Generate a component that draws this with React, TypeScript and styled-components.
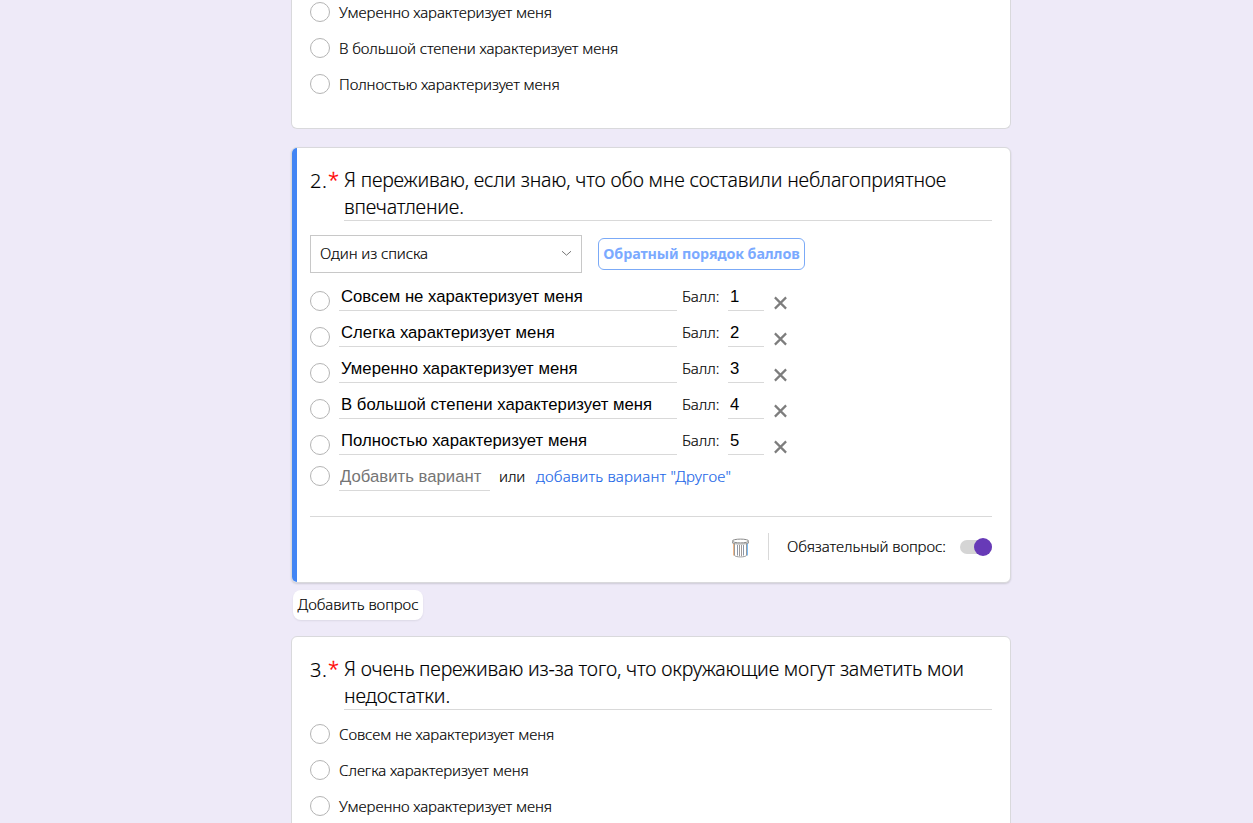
import React, { useState } from "react";
import styled, { createGlobalStyle } from "styled-components";

const GlobalStyle = createGlobalStyle`
  * { box-sizing: border-box; }
  body {
    margin: 0;
    background: #eeeaf8;
    color: #000;
    font-family: "Noto Sans", "Open Sans", sans-serif;
    font-weight: 300;
    font-size: 15px;
    letter-spacing: -0.085px;
    -webkit-text-stroke-width: 0.15px;
  }
  button, input { font: inherit; letter-spacing: inherit; color: inherit; }
`;

const Page = styled.main`
  width: 1253px;
  height: 823px;
  overflow: hidden;
  padding-left: 291px;
`;

const Card = styled.section<{ $active?: boolean; $cut?: "top" | "bottom" }>`
  display: flow-root;
  position: relative;
  width: 720px;
  padding: 0 18px;
  background: #fff;
  border: 1px solid #d9d9dc;
  border-radius: 6px;
  ${(p) => p.$active && "height: 436px; margin-top: 18px; box-shadow: 0 1px 2px rgba(0, 0, 0, 0.14);"}
  ${(p) => p.$cut === "top" && "height: 129px; border-top: 0; border-radius: 0 0 6px 6px;"}
  ${(p) => p.$cut === "bottom" && "height: 220px; margin-top: 16px;"}
`;

const ActiveBar = styled.span`
  position: absolute;
  left: 0;
  top: 0;
  bottom: 0;
  width: 5px;
  background: #4285f4;
  border-radius: 5px 0 0 5px;
`;

const Heading = styled.header`
  display: flex;
  padding-top: 18px;
  font-size: 19.5px;
  line-height: 27px;
  letter-spacing: -0.17px;
`;

const Number = styled.span`
  width: 18px;
  padding-top: 1px;
  font-size: 20px;
  letter-spacing: 0.6px;
`;

const Star = styled.span`
  width: 16px;
  color: #f00;
  font-size: 20px;
  -webkit-text-stroke-width: 0.3px;
`;

const Title = styled.div`
  flex: 1;
  border-bottom: 1px solid #d9d9d9;
`;

const Options = styled.div<{ $top: number }>`
  margin-top: ${(p) => p.$top}px;
`;

const Option = styled.label`
  display: flex;
  align-items: center;
  gap: 9px;
  height: 36px;
  line-height: 20px;
`;

const Circle = styled.span<{ $top?: number }>`
  flex: none;
  width: 20px;
  height: 20px;
  margin-top: ${(p) => p.$top ?? 0}px;
  border: 1px solid #b4b4b4;
  border-radius: 50%;
  background: #fff;
`;

const Controls = styled.div`
  display: flex;
  align-items: center;
  gap: 16px;
  margin-top: 14px;
`;

const Select = styled.div`
  display: flex;
  align-items: center;
  justify-content: space-between;
  width: 272px;
  height: 38px;
  padding: 0 9px 2px;
  border: 1px solid #c8c8c8;
`;

const ReverseButton = styled.button`
  width: 207px;
  height: 32px;
  padding: 0 0 2px;
  background: #fff;
  border: 1px solid #7baaf7;
  border-radius: 6px;
  color: #7baaff;
  font-weight: 700;
  font-size: 14.3px;
  letter-spacing: -0.1px;
  white-space: nowrap;
  -webkit-text-stroke-width: 0;
`;

const EditRow = styled.div`
  display: flex;
  align-items: flex-start;
  height: 36px;
`;

const Field = styled.input<{ $width: number }>`
  width: ${(p) => p.$width}px;
  height: 28px;
  padding: 1px 2px 0;
  border: 0;
  border-bottom: 1px solid #d9d9d9;
  outline: 0;
  background: transparent;
  color: #000;
  font: 400 16.7px "Liberation Sans", Arial, sans-serif;
  letter-spacing: 0.02px;
  -webkit-text-stroke-width: 0;
  &::placeholder { color: #757575; }
`;

const TextField = styled(Field)`
  margin-left: 9px;
`;

const AddField = styled(TextField)`
  padding: 1px 1px 0;
`;

const ScoreLabel = styled.span`
  width: 46px;
  margin-left: 5px;
  line-height: 26px;
`;

const IconButton = styled.button<{ $left?: number; $top?: number }>`
  display: flex;
  margin: ${(p) => p.$top ?? 0}px 0 0 ${(p) => p.$left ?? 0}px;
  padding: 0;
  border: 0;
  background: none;
`;

const AddRow = styled.div`
  display: flex;
  height: 28px;
  line-height: 26px;
`;

const Or = styled.span`
  width: 37px;
  margin-left: 9px;
`;

const Link = styled.a`
  color: #1a66e8;
  letter-spacing: 0.18px;
`;

const Footer = styled.footer`
  display: flex;
  align-items: center;
  justify-content: flex-end;
  height: 61px;
  margin-top: 25px;
  border-top: 1px solid #d9d9d9;
`;

const FooterLabel = styled.span`
  width: 159px;
  padding-bottom: 2px;
  white-space: nowrap;
`;

const Separator = styled.span`
  width: 1px;
  height: 27px;
  margin: -1px 18px 0;
  background: #d9d9d9;
`;

const Toggle = styled.span`
  display: flex;
  align-items: center;
  justify-content: flex-end;
  width: 32px;
  height: 14px;
  margin-left: 14px;
  border-radius: 7px;
  background: #d5d5d5;
`;

const Thumb = styled.span`
  width: 18px;
  height: 18px;
  border-radius: 50%;
  background: #673ab7;
`;

const AddQuestion = styled.button`
  display: block;
  width: 130px;
  height: 30px;
  margin: 7px 0 0 2px;
  padding: 0 0 2px;
  border: 0;
  border-radius: 8px;
  background: #fff;
  box-shadow: 0 1px 2px rgba(0, 0, 0, 0.08);
`;

const Chevron = () => (
  <svg width="11" height="7" viewBox="0 0 11 7" fill="none" stroke="#777" strokeWidth="1">
    <path d="M1 1.2 5.5 5.2 10 1.2" />
  </svg>
);

const Cross = () => (
  <svg width="14" height="14" viewBox="0 0 14 14" fill="none" stroke="#7d7d7d" strokeWidth="2.2">
    <path d="M1.9 1.4 13.1 12.6M13.1 1.4 1.9 12.6" />
  </svg>
);

const Trash = () => (
  <svg width="19" height="20" viewBox="0 0 19 20" fill="none" strokeWidth="1">
    <path d="M3.5 5.5v12c1.5 1.9 10.5 1.9 12 0v-12" stroke="#9a9a9a" />
    <path d="M2.5 5v12.5" stroke="#f3b98a" />
    <path d="M16.5 5v12.5" stroke="#7cbcf4" />
    <ellipse cx="9.5" cy="3" rx="8.2" ry="1.9" stroke="#8a8a8a" />
    <path d="M1.5 3.5v1.6c2 1.2 14 1.2 16 0V3.5" stroke="#999" />
    <path d="M6.5 7v10.5M12.5 7v10.5" stroke="#8d97a8" />
    <path d="M8.5 7v11M10.5 7v11" stroke="#a09a98" />
  </svg>
);

const answers = [
  "Совсем не характеризует меня",
  "Слегка характеризует меня",
  "Умеренно характеризует меня",
  "В большой степени характеризует меня",
  "Полностью характеризует меня",
];

const OptionList = ({ items, top }: { items: string[]; top: number }) => (
  <Options $top={top}>
    {items.map((item) => (
      <Option key={item}>
        <Circle />
        <span>{item}</span>
      </Option>
    ))}
  </Options>
);

export default function App() {
  const [rows, setRows] = useState(answers);
  return (
    <>
      <GlobalStyle />
      <Page>
        <Card $cut="top">
          <OptionList items={answers.slice(2)} top={-6} />
        </Card>

        <Card $active>
          <ActiveBar />
          <Heading>
            <Number>2.</Number>
            <Star>*</Star>
            <Title>
              Я переживаю, если знаю, что обо мне составили неблагоприятное
              <br />
              впечатление.
            </Title>
          </Heading>
          <Controls>
            <Select>
              Один из списка
              <Chevron />
            </Select>
            <ReverseButton>Обратный порядок баллов</ReverseButton>
          </Controls>
          <Options $top={10}>
            {rows.map((row, i) => (
              <EditRow key={row}>
                <Circle $top={8} />
                <TextField $width={338} defaultValue={row} />
                <ScoreLabel>Балл:</ScoreLabel>
                <Field $width={36} defaultValue={i + 1} />
                <IconButton $left={9} $top={13} onClick={() => setRows(rows.filter((r) => r !== row))}>
                  <Cross />
                </IconButton>
              </EditRow>
            ))}
            <AddRow>
              <Circle $top={3} />
              <AddField $width={151} placeholder="Добавить вариант" />
              <Or>или</Or>
              <Link>добавить вариант "Другое"</Link>
            </AddRow>
          </Options>
          <Footer>
            <IconButton $top={2}>
              <Trash />
            </IconButton>
            <Separator />
            <FooterLabel>Обязательный вопрос:</FooterLabel>
            <Toggle>
              <Thumb />
            </Toggle>
          </Footer>
        </Card>

        <AddQuestion>Добавить вопрос</AddQuestion>

        <Card $cut="bottom">
          <Heading>
            <Number>3.</Number>
            <Star>*</Star>
            <Title>
              Я очень переживаю из-за того, что окружающие могут заметить мои
              <br />
              недостатки.
            </Title>
          </Heading>
          <OptionList items={answers.slice(0, 3)} top={6} />
        </Card>
      </Page>
    </>
  );
}
